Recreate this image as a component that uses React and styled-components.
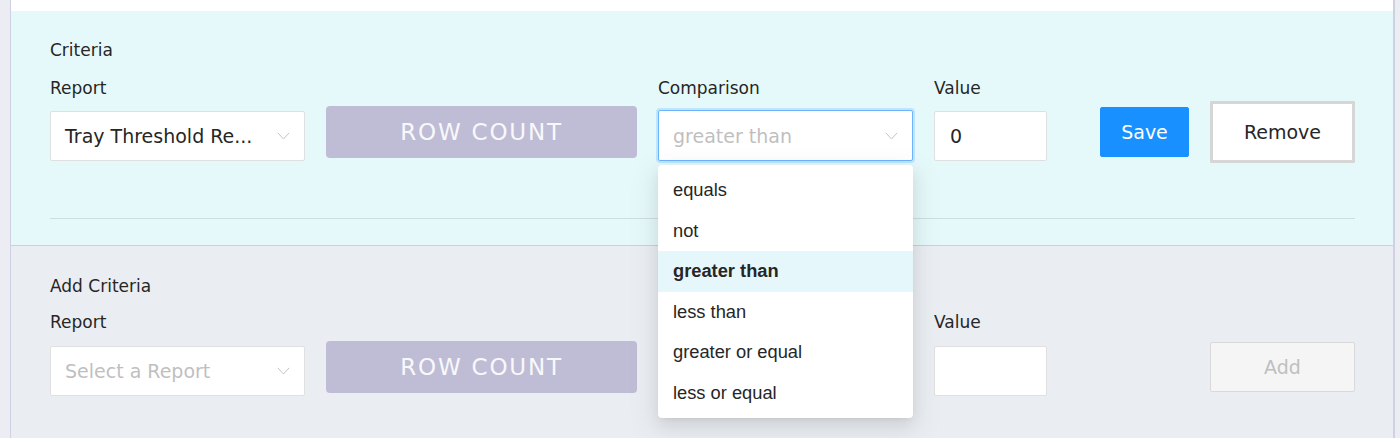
import React from 'react';
import styled, { createGlobalStyle } from 'styled-components';

const GlobalStyle = createGlobalStyle`
  html, body {
    margin: 0;
    padding: 0;
    background: #ebedf2;
    font-family: "DejaVu Sans", "Open Sans", sans-serif;
    color: #262626;
  }
  * {
    box-sizing: border-box;
  }
`;

const Page = styled.div`
  height: 438px;
  margin-left: 10px;
  width: 1385px;
  border-left: 1px solid #cfd1e3;
  border-right: 2px solid #cfd1e3;
  background: #eaedf2;
  display: flex;
  flex-direction: column;
`;

const TopBand = styled.div`
  height: 11px;
  background: #ffffff;
  flex-shrink: 0;
`;

const Section = styled.section`
  background: ${(p) => (p.$active ? '#e6f9fa' : '#eaedf2')};
  border-bottom: ${(p) => (p.$active ? '1px solid #cdcfe0' : 'none')};
  padding: ${(p) => (p.$active ? '29px 38px 26px 39px' : '30px 38px 0 39px')};
  flex: ${(p) => (p.$active ? '0 0 auto' : '1 1 auto')};
`;

const Title = styled.div`
  font-size: 17px;
  line-height: 20px;
  color: #262626;
  margin-bottom: ${(p) => p.$gap || 18}px;
`;

const Grid = styled.div`
  display: grid;
  grid-template-columns: 255px 311px 255px 113px 1fr;
  column-gap: 21px;
  align-items: start;
`;

const Field = styled.div`
  display: flex;
  flex-direction: column;
  position: relative;
`;

const Label = styled.div`
  font-size: 17px;
  line-height: 20px;
  height: 20px;
  color: #262626;
  visibility: ${(p) => (p.$hidden ? 'hidden' : 'visible')};
`;

const SelectBox = styled.div`
  margin-top: ${(p) => p.$offset ?? 13}px;
  height: ${(p) => (p.$focused ? 51 : 50)}px;
  background: #ffffff;
  border: ${(p) => (p.$focused ? '1px solid #6cb4ff' : '1px solid #e0e0e0')};
  box-shadow: ${(p) => (p.$focused ? '0 0 0 2px rgba(24, 144, 255, 0.18)' : 'none')};
  border-radius: 2px;
  display: flex;
  align-items: center;
  padding: 0 14px 0 14px;
  gap: 12px;
`;

const SelectText = styled.span`
  flex: 1;
  min-width: 0;
  font-size: 19px;
  white-space: nowrap;
  color: ${(p) => (p.$placeholder ? '#bfbfbf' : '#262626')};
`;

const Chevron = () => (
  <svg width="13" height="8" viewBox="0 0 13 8" fill="none">
    <polyline points="0.8,0.8 6.5,7 12.2,0.8" stroke="#c4c4c4" strokeWidth="1" />
  </svg>
);

const RowCount = styled.div`
  margin-top: ${(p) => p.$offset ?? 8}px;
  height: 52px;
  border-radius: 4px;
  background: #bfbdd5;
  color: #f8f8fb;
  font-size: 23px;
  letter-spacing: 1.8px;
  display: flex;
  align-items: center;
  justify-content: center;
`;

const ValueInput = styled.input`
  margin-top: ${(p) => p.$offset ?? 13}px;
  height: 50px;
  width: 113px;
  border: 1px solid #e0e0e0;
  border-radius: 2px;
  background: #ffffff;
  padding: 0 15px;
  font-family: inherit;
  font-size: 19px;
  color: #262626;
  outline: none;
`;

const Actions = styled.div`
  grid-row: 2;
  grid-column: 5;
  display: flex;
  justify-content: flex-end;
  align-items: flex-start;
  gap: 21px;
`;

const Button = styled.button`
  font-family: inherit;
  font-size: 19px;
  cursor: pointer;
  border-radius: 2px;
  display: flex;
  align-items: center;
  justify-content: center;
  ${(p) =>
    p.$variant === 'primary' &&
    `
    margin-top: 9px;
    width: 89px;
    height: 50px;
    background: #1890ff;
    border: 1px solid #1890ff;
    color: #ffffff;
  `}
  ${(p) =>
    p.$variant === 'outline' &&
    `
    margin-top: 3px;
    width: 145px;
    height: 62px;
    background: #ffffff;
    border: 3px solid #d6d6d6;
    border-radius: 1px;
    color: #262626;
  `}
  ${(p) =>
    p.$variant === 'disabled' &&
    `
    margin-top: 10px;
    width: 145px;
    height: 50px;
    background: #f5f5f5;
    border: 1px solid #d9d9d9;
    color: #bfbfbf;
    cursor: not-allowed;
  `}
`;

const Divider = styled.div`
  margin-top: 55px;
  height: 1px;
  background: #cfdede;
`;

const Menu = styled.ul`
  position: absolute;
  top: calc(100% + 4px);
  left: 0;
  width: 255px;
  margin: 0;
  padding: 5px 0;
  list-style: none;
  background: #ffffff;
  border-radius: 4px;
  z-index: 10;
  box-shadow: 0 3px 6px -4px rgba(0, 0, 0, 0.12), 0 6px 16px 0 rgba(0, 0, 0, 0.08),
    0 9px 28px 8px rgba(0, 0, 0, 0.05);
`;

const MenuItem = styled.li`
  height: 40.5px;
  display: flex;
  align-items: center;
  padding: 0 15px;
  font-family: "Liberation Sans", Arial, sans-serif;
  font-size: 18.3px;
  color: #262626;
  font-weight: ${(p) => (p.$selected ? 700 : 400)};
  background: ${(p) => (p.$selected ? '#e6f7fc' : 'transparent')};
`;

const comparisons = ['equals', 'not', 'greater than', 'less than', 'greater or equal', 'less or equal'];

function App() {
  return (
    <>
      <GlobalStyle />
      <Page>
        <TopBand />
        <Section $active>
          <Title>Criteria</Title>
          <Grid>
            <Label>Report</Label>
            <Label $hidden>Field</Label>
            <Label>Comparison</Label>
            <Label>Value</Label>
            <Label $hidden>Actions</Label>

            <SelectBox>
              <SelectText>Tray Threshold Re...</SelectText>
              <Chevron />
            </SelectBox>
            <RowCount>ROW COUNT</RowCount>
            <Field>
              <SelectBox $focused $offset={12}>
                <SelectText $placeholder>greater than</SelectText>
                <Chevron />
              </SelectBox>
              <Menu>
                {comparisons.map((c) => (
                  <MenuItem key={c} $selected={c === 'greater than'}>
                    {c}
                  </MenuItem>
                ))}
              </Menu>
            </Field>
            <ValueInput defaultValue="0" />
            <Actions>
              <Button $variant="primary">Save</Button>
              <Button $variant="outline">Remove</Button>
            </Actions>
          </Grid>
          <Divider />
        </Section>

        <Section>
          <Title $gap={16}>Add Criteria</Title>
          <Grid>
            <Label>Report</Label>
            <Label $hidden>Field</Label>
            <Label $hidden>Comparison</Label>
            <Label>Value</Label>
            <Label $hidden>Actions</Label>

            <SelectBox $offset={14}>
              <SelectText $placeholder>Select a Report</SelectText>
              <Chevron />
            </SelectBox>
            <RowCount $offset={9}>ROW COUNT</RowCount>
            <SelectBox $offset={14}>
              <SelectText $placeholder />
              <Chevron />
            </SelectBox>
            <ValueInput $offset={14} />
            <Actions>
              <Button $variant="disabled" disabled>
                Add
              </Button>
            </Actions>
          </Grid>
        </Section>
      </Page>
    </>
  );
}

export default App;
